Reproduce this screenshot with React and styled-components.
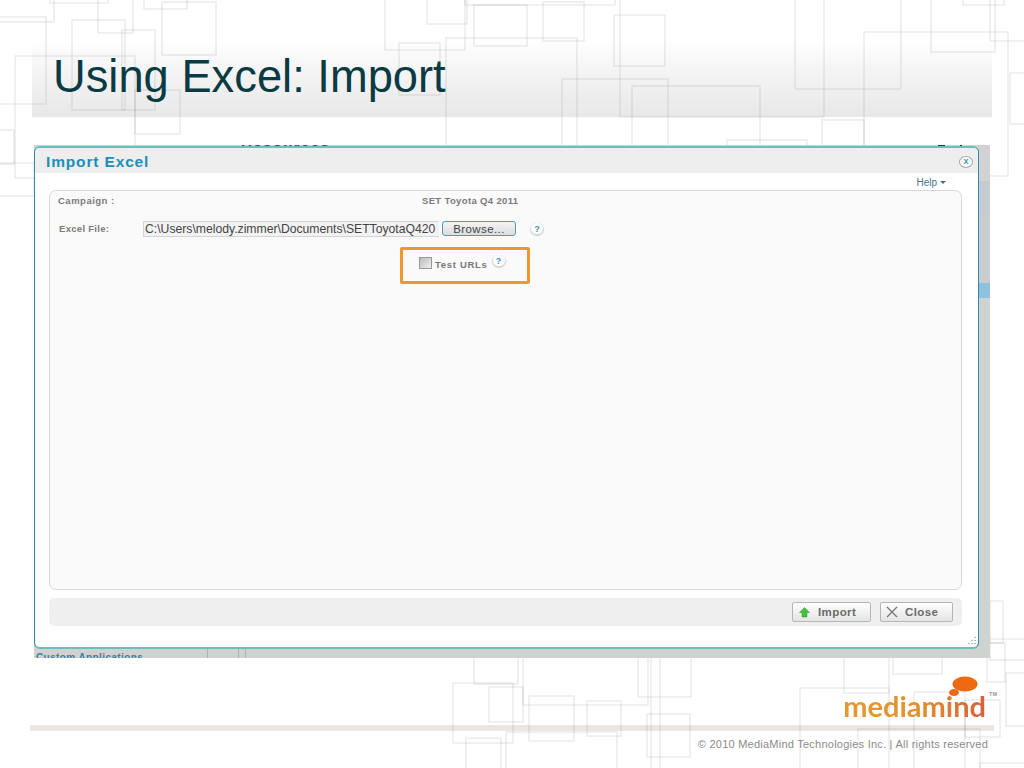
import React from 'react';
import styled, { createGlobalStyle } from 'styled-components';

const squares = [
  [-5, -5, 54, 22], [-5, 17, 46, 104], [98, -5, 133, 33], [50, -5, 108, 3], [72, 20, 125, 110],
  [122, 30, 155, 110], [162, 2, 216, 55], [144, -5, 187, 9], [15, 56, 135, 178], [135, 90, 180, 134],
  [-5, 130, 14, 164], [-5, 163, 34, 196], [385, -5, 465, 50], [427, -5, 467, 24], [465, -5, 615, 5],
  [474, 5, 527, 46], [446, 38, 577, 150], [399, 43, 440, 95], [543, 2, 584, 41], [614, 15, 665, 66],
  [620, -5, 824, 117], [795, -5, 901, 89], [864, 32, 1008, 176], [931, -5, 995, 52], [990, -5, 1050, 41],
  [963, -5, 1004, 5], [562, 79, 668, 150], [632, 86, 760, 150], [727, 140, 807, 150], [822, 120, 864, 150],
  [1010, 73, 1030, 124], [453, 683, 513, 743], [474, 650, 518, 684], [489, 687, 523, 722],
  [523, 650, 648, 705], [529, 696, 574, 741], [587, 701, 621, 736], [506, 732, 617, 775],
  [466, 738, 501, 775], [638, 650, 691, 697], [647, 714, 690, 757], [651, 650, 660, 775],
  [990, 601, 1003, 643], [800, 688, 889, 775], [844, 650, 889, 693], [893, 650, 942, 674],
  [914, 692, 965, 775], [965, 700, 1000, 737], [1006, 673, 1030, 726], [987, 643, 1005, 682],
  [990, 639, 1030, 660], [858, 729, 980, 775], [980, 763, 1030, 775], [823, 650, 823, 775],
];

const GlobalStyle = createGlobalStyle`
  html, body {
    margin: 0;
    padding: 0;
    background: #fff;
    font-family: "Liberation Sans", Arial, sans-serif;
  }
`;

const Slide = styled.div`
  position: relative;
  width: 1024px;
  height: 768px;
  overflow: hidden;
  background: #fff;
`;

const Pattern = styled.svg`
  position: absolute;
  inset: 0;
  pointer-events: none;
`;

const TitleBand = styled.header`
  margin: 40px 0 0 32px;
  width: 960px;
  height: 77px;
  box-sizing: border-box;
  padding-left: 21px;
  background: linear-gradient(to bottom, #fff 0%, #f4f4f4 40%, #e8e8e8 100%);
`;

const Title = styled.h1`
  position: relative;
  z-index: 1;
  margin: 0;
  font-size: 45.3px;
  line-height: 73px;
  font-weight: 400;
  color: #0a3a42;
`;

const Backdrop = styled.div`
  position: relative;
  z-index: 1;
  margin: 28px 0 0 34px;
  width: 956px;
  height: 513px;
  box-sizing: border-box;
  padding-top: 1px;
  overflow: hidden;
  background: linear-gradient(to bottom,
    #d2d2d2 0, #d2d2d2 36px, #c4ccd2 36px, #c4ccd2 70px, #c9cdcd 70px, #c9cdcd 138px,
    #8fc0dc 138px, #8fc0dc 153px, #cfd3d0 153px, #cfd3d0 100%);
`;

const BehindHeading = styled.span`
  position: absolute;
  top: -6px;
  left: 207px;
  font-size: 15px;
  font-weight: 700;
  letter-spacing: 1.4px;
  color: #1f4f6f;
`;

const BehindMark = styled.i`
  position: absolute;
  top: 0;
  left: ${p => p.$left}px;
  width: ${p => p.$width}px;
  height: 1px;
  background: #333;
`;

const Dialog = styled.section`
  position: relative;
  width: 945px;
  height: 503px;
  box-sizing: border-box;
  background: #fff;
  border: 1px solid #2a8db0;
  border-top: 2px solid #6fbcc0;
  border-bottom: 2px solid #6fbcc0;
  border-radius: 6px;
`;

const DialogBar = styled.div`
  display: flex;
  align-items: center;
  justify-content: space-between;
  height: 25px;
  box-sizing: border-box;
  padding: 2px 5px 0 11px;
  background: #eee;
  border-radius: 5px 5px 0 0;
`;

const DialogTitle = styled.h2`
  margin: 0;
  font-size: 15.5px;
  font-weight: 700;
  letter-spacing: 0.85px;
  color: #1d8fb8;
`;

const CloseDot = styled.span`
  width: 12px;
  height: 10px;
  display: flex;
  align-items: center;
  justify-content: center;
  border: 1.5px solid #a5a5a5;
  border-radius: 50%;
  background: #fff;
  font-size: 9px;
  font-weight: 700;
  line-height: 9px;
  color: #3f9db5;
`;

const HelpRow = styled.div`
  display: flex;
  align-items: center;
  justify-content: flex-end;
  gap: 3px;
  height: 17px;
  box-sizing: border-box;
  padding: 2px 32px 0 0;
  font-size: 10px;
  color: #4f6f7f;
`;

const Caret = styled.i`
  width: 0;
  height: 0;
  border-left: 3.5px solid transparent;
  border-right: 3.5px solid transparent;
  border-top: 3.5px solid #4f6f7f;
`;

const Panel = styled.div`
  margin: 0 16px 0 14px;
  height: 400px;
  box-sizing: border-box;
  padding-top: 3px;
  background: #fafafa;
  border: 1px solid #d8d8d8;
  border-radius: 7px;
`;

const CampaignRow = styled.div`
  display: flex;
  align-items: center;
  height: 13px;
  padding-left: 8px;
  font-size: 9.5px;
  font-weight: 700;
  letter-spacing: 0.5px;
  color: #7b7b7b;
`;

const CampaignLabel = styled.span`
  width: 364px;
`;

const CampaignValue = styled.span`
  letter-spacing: 0.35px;
`;

const FileRow = styled.div`
  display: flex;
  align-items: center;
  margin-top: 13px;
  height: 17px;
  padding-left: 9px;
`;

const FileLabel = styled.span`
  width: 84px;
  font-size: 9.5px;
  font-weight: 700;
  letter-spacing: 0.3px;
  color: #7b7b7b;
`;

const FilePath = styled.div`
  width: 296px;
  height: 16px;
  box-sizing: border-box;
  padding-left: 1px;
  background: #f2f2f2;
  border: 1px solid #d4d4d4;
  border-width: 1px 0 1px 1px;
  font-size: 12.2px;
  line-height: 14px;
  white-space: nowrap;
  overflow: hidden;
  color: #444;
`;

const BrowseButton = styled.button`
  margin-left: 3px;
  width: 74px;
  height: 15px;
  padding: 0;
  background: linear-gradient(to bottom, #f4f4f4, #dcdcdc);
  border: 1.5px solid #4a9cc4;
  border-radius: 3px;
  font-family: inherit;
  font-size: 11.5px;
  line-height: 12px;
  letter-spacing: 0.4px;
  color: #444;
`;

const HelpDot = styled.span`
  margin-left: ${p => p.$gap}px;
  margin-bottom: ${p => p.$lift || 0}px;
  width: 12px;
  height: 11px;
  display: inline-flex;
  align-items: center;
  justify-content: center;
  background: #fff;
  border-radius: 50%;
  box-shadow: 0 1px 1px 1px #d4d4d4;
  font-size: 9px;
  font-weight: 700;
  color: #3a8fc0;
`;

const TestBox = styled.div`
  display: flex;
  align-items: center;
  margin: 10px 0 0 350px;
  width: 130px;
  height: 37px;
  box-sizing: border-box;
  padding: 0 0 5px 16px;
  border: 3px solid #f0962a;
  border-radius: 2px;
`;

const Checkbox = styled.span`
  width: 11px;
  height: 10px;
  background: linear-gradient(135deg, #bdbdbd, #eee);
  border: 1px solid #999;
`;

const TestLabel = styled.span`
  margin: 2px 0 0 3px;
  font-size: 9.5px;
  font-weight: 700;
  letter-spacing: 0.7px;
  color: #777;
`;

const ActionBar = styled.div`
  display: flex;
  align-items: center;
  justify-content: flex-end;
  gap: 9px;
  margin: 8px 16px 0 14px;
  height: 28px;
  padding-right: 9px;
  background: #efefef;
  border-radius: 5px;
`;

const ActionButton = styled.button`
  display: flex;
  align-items: center;
  gap: ${p => p.$gap}px;
  width: ${p => p.$width}px;
  height: 20px;
  padding: 0 0 0 ${p => p.$inset}px;
  background: linear-gradient(to bottom, #fff, #e4e4e4);
  border: 1px solid #b5b5b5;
  border-radius: 2px;
  font-family: inherit;
  font-size: 11.5px;
  font-weight: 700;
  letter-spacing: 0.4px;
  color: #6a6a6a;
`;

const Grip = styled.svg`
  position: absolute;
  right: 1px;
  bottom: 1px;
`;

const BottomStrip = styled.div`
  display: flex;
  height: 9px;
  overflow: hidden;
`;

const StripCell = styled.div`
  width: ${p => p.$width}px;
  height: 100%;
  box-sizing: border-box;
  padding-left: 2px;
  border-right: 1px solid #aeb3ae;
  font-size: 10px;
  line-height: 18px;
  font-weight: 700;
  letter-spacing: 0.4px;
  color: #3b7ea0;
  white-space: nowrap;
`;

const Brand = styled.div`
  position: relative;
  z-index: 1;
  display: flex;
  justify-content: flex-end;
  align-items: flex-end;
  margin: 16px 27px 0 0;
  height: 45px;
`;

const BrandName = styled.div`
  position: relative;
  font-family: Lato, "Open Sans", sans-serif;
  font-size: 29px;
  font-weight: 700;
  line-height: 26px;
  color: transparent;
  background: linear-gradient(to right, #e6982f 0%, #e39230 50%, #d8613a 100%);
  -webkit-background-clip: text;
  background-clip: text;
`;

const BrandBubble = styled.svg`
  position: absolute;
  top: -17px;
  right: 8px;
`;

const Trademark = styled.span`
  align-self: flex-start;
  margin: 17px 0 0 3px;
  font-size: 5.5px;
  font-weight: 700;
  color: #999;
`;

const Rule = styled.div`
  margin: 6px 0 0 30px;
  width: 964px;
  height: 6px;
  background: #ebe6e3;
`;

const Copyright = styled.footer`
  position: relative;
  z-index: 1;
  margin: 7px 36px 0 0;
  text-align: right;
  font-size: 11px;
  line-height: 13px;
  letter-spacing: 0.24px;
  color: #8a8a8a;
`;

export default function App () {
  return (
    <>
      <GlobalStyle />
      <Slide>
        <TitleBand>
          <Title>Using Excel: Import</Title>
        </TitleBand>
        <Pattern width="1024" height="768">
          {squares.map(([x1, y1, x2, y2], i) => (
            <rect key={i} x={x1} y={y1} width={x2 - x1} height={y2 - y1} fill="none" stroke="rgba(120,120,120,0.14)" strokeWidth="1.5" />
          ))}
        </Pattern>

        <Backdrop>
          <BehindHeading>Resources</BehindHeading>
          <BehindMark $left={904} $width={7} />
          <BehindMark $left={926} $width={2} />
          <Dialog>
            <DialogBar>
              <DialogTitle>Import Excel</DialogTitle>
              <CloseDot>x</CloseDot>
            </DialogBar>
            <HelpRow>Help <Caret /></HelpRow>
            <Panel>
              <CampaignRow>
                <CampaignLabel>Campaign :</CampaignLabel>
                <CampaignValue>SET Toyota Q4 2011</CampaignValue>
              </CampaignRow>
              <FileRow>
                <FileLabel>Excel File:</FileLabel>
                <FilePath>C:\Users\melody.zimmer\Documents\SETToyotaQ420</FilePath>
                <BrowseButton>Browse...</BrowseButton>
                <HelpDot $gap={15}>?</HelpDot>
              </FileRow>
              <TestBox>
                <Checkbox />
                <TestLabel>Test URLs</TestLabel>
                <HelpDot $gap={5} $lift={5}>?</HelpDot>
              </TestBox>
            </Panel>
            <ActionBar>
              <ActionButton $width={79} $gap={8} $inset={6}>
                <svg width="11" height="11" viewBox="0 0 11 11">
                  <path d="M5.5 0.5 L10.5 5.5 L8 5.5 L8 10 L3 10 L3 5.5 L0.5 5.5 Z" fill="#45c23a" stroke="#2e9a2a" strokeWidth="0.5" />
                </svg>
                Import
              </ActionButton>
              <ActionButton $width={73} $gap={7} $inset={5}>
                <svg width="12" height="12" viewBox="0 0 12 12">
                  <path d="M1 1 L11 11 M11 1 L1 11" stroke="#777" strokeWidth="1.3" fill="none" />
                </svg>
                Close
              </ActionButton>
            </ActionBar>
            <Grip width="12" height="10" viewBox="0 0 12 10">
              <g fill="#9aa6aa">
                <circle cx="10" cy="1.5" r="0.8" />
                <circle cx="7" cy="4.5" r="0.8" />
                <circle cx="10" cy="4.5" r="0.8" />
                <circle cx="4" cy="7.5" r="0.8" />
                <circle cx="7" cy="7.5" r="0.8" />
                <circle cx="10" cy="7.5" r="0.8" />
              </g>
            </Grip>
          </Dialog>
          <BottomStrip>
            <StripCell $width={174}>Custom Applications</StripCell>
            <StripCell $width={31} />
            <StripCell $width={7} />
          </BottomStrip>
        </Backdrop>

        <Brand>
          <BrandName>
            mediamind
            <BrandBubble width="30" height="21" viewBox="0 0 30 21">
              <ellipse cx="17" cy="8" rx="12.5" ry="7.5" fill="#ee6a12" />
              <ellipse cx="6" cy="16.5" rx="5" ry="3.5" fill="#ee6a12" />
            </BrandBubble>
          </BrandName>
          <Trademark>TM</Trademark>
        </Brand>
        <Rule />
        <Copyright>© 2010 MediaMind Technologies Inc. | All rights reserved</Copyright>
      </Slide>
    </>
  );
}
